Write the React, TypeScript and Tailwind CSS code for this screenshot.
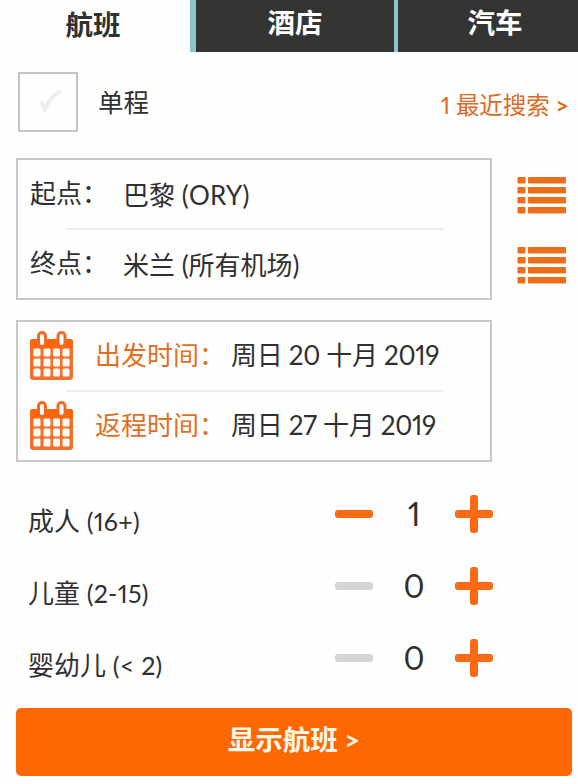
import React, { useState } from 'react';
import clsx from 'clsx';

const tabs = ['航班', '酒店', '汽车'];

const ListIcon = () => (
  <svg width="50" height="40" viewBox="0 0 50 40" fill="#ea6e1c">
    {[1, 11, 21, 31].map((y) => (
      <g key={y}>
        <rect x="0.500" y={y} width="8" height="6.500" rx="1" />
        <rect x="11" y={y} width="38" height="6.500" rx="1" />
      </g>
    ))}
  </svg>
);

const CalendarIcon = () => (
  <svg width="46" height="52" viewBox="0 0 46 52">
    <rect x="1" y="9" width="43" height="41" rx="3" fill="#f2702c" />
    <path d="M1 18V12a3 3 0 0 1 3-3h37a3 3 0 0 1 3 3v6z" fill="#fb660d" />
    <rect x="8" y="1" width="10" height="16" rx="5" fill="#f26a22" />
    <rect x="27.500" y="1" width="10" height="16" rx="5" fill="#f26a22" />
    <rect x="11" y="4" width="4" height="11" rx="2" fill="#fff" />
    <rect x="30.500" y="4" width="4" height="11" rx="2" fill="#fff" />
    {[18.5, 28.5, 38.5].map((y) =>
      [4.5, 14.5, 24, 33.5].map((x) => (
        <rect key={`${x}-${y}`} x={x} y={y} width="7" height="8" rx="1.500" fill="#fffaf5" />
      ))
    )}
  </svg>
);

const MinusIcon = ({ disabled }: { disabled: boolean }) => (
  <svg width="40" height="40" viewBox="0 0 40 40">
    <rect x="1" y="16" width="38" height="8" rx="3" fill={disabled ? '#d6d4d4' : '#f96a13'} />
  </svg>
);

const PlusIcon = () => (
  <svg width="40" height="40" viewBox="0 0 40 40" fill="#f96a13">
    <rect x="1" y="16" width="38" height="8" rx="3" />
    <rect x="16" y="1" width="8" height="38" rx="3" />
  </svg>
);

const PlaceRow = ({ label, children }: { label: string; children: React.ReactNode }) => (
  <div className="flex h-[68px] items-center pl-3">
    <span className="flex w-[93px] pb-0.5 whitespace-nowrap">
      <span>{label}</span>
      <span>：</span>
    </span>
    <span className="pt-0.5 whitespace-nowrap">{children}</span>
  </div>
);

const DateRow = ({ label, children }: { label: string; children: React.ReactNode }) => (
  <div className="flex h-[68px] items-center pl-[11px]">
    <CalendarIcon />
    <span className="ml-5 flex w-[136px] pb-0.5 whitespace-nowrap text-[#e0701f]">
      <span>{label}</span>
      <span>：</span>
    </span>
    <span className="pb-0.5 tracking-[-0.3px] whitespace-nowrap">{children}</span>
  </div>
);

const Divider = () => <div className="ml-12 h-0.5 w-[377px] bg-[#ececec]" />;

const passengers = [
  { name: '成人', range: '(16+)' },
  { name: '儿童', range: '(2-15)' },
  { name: '婴幼儿', range: '(< 2)' },
];

export default function App() {
  const [active, setActive] = useState(0);
  const [oneWay, setOneWay] = useState(false);
  const [counts, setCounts] = useState([1, 0, 0]);

  const change = (index: number, delta: number) =>
    setCounts(counts.map((c, i) => (i === index ? Math.max(0, c + delta) : c)));

  return (
    <div className="h-[784px] w-[578px] overflow-hidden bg-[#fefefe] font-['Lato','Noto_Sans_CJK_SC',sans-serif] text-[26px] leading-none text-[#303030] proportional-nums">
      {/* Tabs */}
      <div className="grid h-[52px] grid-cols-[190px_204px_184px] bg-[#8cc4d0]">
        {tabs.map((tab, i) => (
          <button
            key={tab}
            onClick={() => setActive(i)}
            className={clsx(
              'text-[27.5px] leading-none font-bold',
              i === 0 && 'pr-1',
              i === 1 && 'ml-1.5',
              i === 2 && 'ml-1 pl-3.5',
              i === active ? 'bg-[#fefefe] pb-0.5 text-[#303030]' : 'bg-[#343432] pb-1.5 text-white'
            )}
          >
            {tab}
          </button>
        ))}
      </div>

      {/* One way + recent searches */}
      <div className="flex h-[106px] items-start pt-5 pr-[9px] pl-[18px]">
        <button
          onClick={() => setOneWay(!oneWay)}
          className="flex h-[60px] w-[60px] items-center justify-center border-2 border-[#c4c4c4]"
        >
          <svg width="26" height="26" viewBox="0 0 26 26" className="mb-1 ml-1.5">
            <path d="M3 14.500l4 7.500C11 13 15 8 22.500 4" fill="none" stroke={oneWay ? '#f96a13' : '#ededed'} strokeWidth="4" />
          </svg>
        </button>
        <span className="mt-[18px] ml-5 text-[25.5px]">单程</span>
        <a className="mt-[22px] ml-auto text-[23.5px] leading-none tracking-[-0.1px] text-[#dc6a20]">
          1 最近搜索 <b>&gt;</b>
        </a>
      </div>

      {/* Places */}
      <div className="flex pl-4">
        <div className="h-[142px] w-[476px] border-2 border-[#c8c8c8]">
          <PlaceRow label="起点">
            巴黎 <span className="tracking-[0.3px]">(ORY)</span>
          </PlaceRow>
          <Divider />
          <PlaceRow label="终点">米兰 (所有机场)</PlaceRow>
        </div>
        <div className="ml-[25px] flex flex-col gap-[30px] pt-[18px]">
          <ListIcon />
          <ListIcon />
        </div>
      </div>

      {/* Dates */}
      <div className="mt-5 ml-4 h-[142px] w-[476px] border-2 border-[#c8c8c8]">
        <DateRow label="出发时间">周日 20 十月 2019</DateRow>
        <Divider />
        <DateRow label="返程时间">周日 27 十月 2019</DateRow>
      </div>

      {/* Passengers */}
      <div className="mt-4">
        {passengers.map((p, i) => (
          <div key={p.name} className="flex h-[72px] items-center pl-7">
            <span className="w-[306px] pt-3.5">
              {p.name} <span className="text-[25px] tracking-[0.3px]">{p.range}</span>
            </span>
            <button onClick={() => change(i, -1)}>
              <MinusIcon disabled={counts[i] === 0} />
            </button>
            <span className="w-20 text-center text-[32px] leading-none">{counts[i]}</span>
            <button onClick={() => change(i, 1)}>
              <PlusIcon />
            </button>
          </div>
        ))}
      </div>

      <button className="mt-3.5 ml-4 h-[68px] w-[556px] rounded-[5px] bg-[#ff6700] pb-1 text-[27.5px] leading-none font-bold text-[#fff8ee]">
        显示航班 &gt;
      </button>
    </div>
  );
}
